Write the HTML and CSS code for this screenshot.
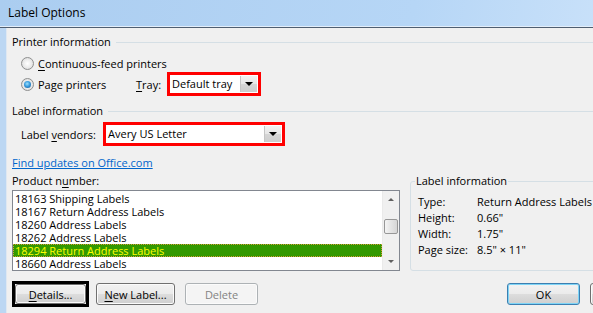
FILE: index.html
```html
<!DOCTYPE html>
<html lang="en">
<head>
    <meta charset="UTF-8">
    <title>Label Options</title>
    <link rel="stylesheet" href="styles.css">
</head>
<body>
    <div class="window">
        <div class="titlebar">Label Options</div>
        <div class="frame">
            <div class="client">
                <div class="section-head"><span>Printer information</span><i class="rule"></i></div>

                <div class="radio-row first">
                    <span class="radio"></span>
                    <span class="radio-label"><u>C</u>ontinuous-feed printers</span>
                </div>

                <div class="radio-row second">
                    <span class="radio checked"></span>
                    <span class="radio-label fixed">Pa<u>g</u>e printers</span>
                    <span class="field-label"><u>T</u>ray:</span>
                    <div class="combo tray">
                        <span class="combo-text">Default tray</span>
                        <span class="drop"><i></i></span>
                    </div>
                </div>

                <div class="section-head label-head"><span>Label information</span><i class="rule"></i></div>

                <div class="vendor-row">
                    <span class="vendor-label">Label <u>v</u>endors:</span>
                    <div class="combo vendors">
                        <span class="combo-text">Avery US Letter</span>
                        <span class="drop"><i></i></span>
                    </div>
                </div>

                <a class="link" href="#">Find updates on Office.com</a>

                <div class="lower">
                    <div class="product-col">
                        <div class="product-label">Product n<u>u</u>mber:</div>
                        <div class="listbox">
                            <ul class="items">
                                <li>18163 Shipping Labels</li>
                                <li>18167 Return Address Labels</li>
                                <li>18260 Address Labels</li>
                                <li>18262 Address Labels</li>
                                <li class="selected">18294 Return Address Labels</li>
                                <li>18660 Address Labels</li>
                            </ul>
                            <div class="scrollbar">
                                <span class="arrow up"></span>
                                <span class="track"><span class="thumb"></span></span>
                                <span class="arrow down"></span>
                            </div>
                        </div>
                    </div>

                    <fieldset class="info">
                        <legend>Label information</legend>
                        <div class="info-rows">
                            <div class="info-row"><span class="key">Type:</span><span>Return Address Labels</span></div>
                            <div class="info-row"><span class="key">Height:</span><span>0.66"</span></div>
                            <div class="info-row"><span class="key">Width:</span><span>1.75"</span></div>
                            <div class="info-row"><span class="key">Page size:</span><span>8.5" × 11"</span></div>
                        </div>
                    </fieldset>
                </div>

                <div class="buttons">
                    <span class="mark"><button class="btn details"><u>D</u>etails...</button></span>
                    <button class="btn newlabel"><u>N</u>ew Label...</button>
                    <button class="btn delete" disabled>Delete</button>
                    <span class="spacer"></span>
                    <button class="btn ok">OK</button>
                    <button class="btn cancel">Cancel</button>
                </div>
            </div>
        </div>
    </div>
</body>
</html>
```

FILE: styles.css
```css
html, body {
    margin: 0;
    padding: 0;
    overflow: hidden;
}
body {
    font-family: "Open Sans", "Noto Sans", sans-serif;
    font-size: 11px;
    color: #000;
    width: 593px;
    height: 313px;
}
u {
    text-decoration: underline;
    text-underline-offset: 2px;
}
.window {
    width: 700px;
    height: 313px;
    display: flex;
    flex-direction: column;
    background: linear-gradient(100deg, #abcdf0 0%, #b6d6f6 55%, #d7e9fc 100%);
}
.titlebar {
    height: 26px;
    line-height: 25px;
    padding-left: 8px;
    font-size: 12px;
    border-bottom: 1px solid #e3eefa;
    box-shadow: 0 1px 0 #4f5e70;
}
.frame {
    flex: 1;
    display: flex;
    padding-left: 6px;
    background: #bcd7f3;
    margin-top: 1px;
}
.client {
    width: 669px;
    background: #f0f0f0;
    border-left: 1px solid #dfe8f2;
    padding: 6px 12px 0 5px;
    box-sizing: border-box;
}
.section-head {
    display: flex;
    align-items: center;
    height: 16px;
    line-height: 16px;
}
.section-head .rule {
    flex: 1;
    height: 1px;
    margin-left: 5px;
    margin-right: -20px;
    background: #d5dfe5;
}
.label-head {
    margin-top: 7px;
}
.radio-row {
    display: flex;
    align-items: center;
    padding-left: 9px;
}
.radio-row.first {
    height: 16px;
    margin-top: 5px;
}
.radio-row.second {
    height: 24px;
    margin-top: 1px;
}
.radio {
    width: 13px;
    height: 13px;
    box-sizing: border-box;
    border-radius: 50%;
    border: 1px solid #8e8f8f;
    background: radial-gradient(circle at 50% 50%, #ffffff 0%, #eeeeee 45%, #d2d2d2 100%);
    margin-right: 4px;
}
.radio.checked::after {
    content: "";
    display: block;
    width: 7px;
    height: 7px;
    margin: 2px;
    border-radius: 50%;
    background: radial-gradient(circle at 45% 40%, #9fe0fb 0%, #3a9ee0 45%, #15508c 100%);
}
.radio-label.fixed {
    width: 98px;
}
.field-label {
    width: 31px;
}
.combo {
    display: flex;
    align-items: center;
    box-sizing: border-box;
    height: 24px;
    border: 3px solid #ff0000;
    background: #fff;
}
.combo.tray {
    width: 94px;
}
.combo.vendors {
    width: 182px;
}
.combo-text {
    flex: 1;
    padding-left: 2px;
    line-height: 16px;
}
.drop {
    width: 16px;
    height: 16px;
    margin-right: 1px;
    display: flex;
    align-items: center;
    justify-content: center;
    background: linear-gradient(#f2f2f2, #e6e6e6 50%, #d6d6d6 50%, #cdcdcd);
    border-left: 1px solid #c5c5c5;
}
.drop i {
    width: 0;
    height: 0;
    border-left: 4px solid transparent;
    border-right: 4px solid transparent;
    border-top: 4px solid #000;
}
.vendor-row {
    display: flex;
    align-items: center;
    height: 24px;
    margin-top: 3px;
    padding-left: 9px;
}
.vendor-label {
    width: 82px;
}
.link {
    display: block;
    width: max-content;
    height: 16px;
    line-height: 16px;
    margin-top: 9px;
    color: #0066cc;
    text-decoration: underline;
}
.lower {
    display: flex;
    margin-top: 2px;
}
.product-col {
    width: 388px;
}
.product-label {
    height: 16px;
    line-height: 16px;
}
.listbox {
    margin-top: 1px;
    height: 81px;
    box-sizing: border-box;
    border: 1px solid #828790;
    background: #fff;
    display: flex;
}
.items {
    list-style: none;
    margin: 0;
    padding: 1px 0 0 0;
    flex: 1;
}
.items li {
    height: 13px;
    line-height: 13px;
    padding-left: 2px;
    white-space: nowrap;
}
.items li.selected {
    background: #339900;
    color: #ffff00;
    outline: 1px dotted #d59a3a;
    outline-offset: -1px;
}
.scrollbar {
    width: 17px;
    display: flex;
    flex-direction: column;
    background: #f0f0f0;
    border-left: 1px solid #eaeaea;
    box-sizing: border-box;
}
.arrow {
    height: 17px;
    display: flex;
    align-items: center;
    justify-content: center;
}
.arrow::after {
    content: "";
    width: 0;
    height: 0;
    border-left: 3px solid transparent;
    border-right: 3px solid transparent;
}
.arrow.up::after {
    border-bottom: 3px solid #606060;
}
.arrow.down::after {
    border-top: 3px solid #606060;
}
.track {
    flex: 1;
    padding: 11px 1px 0 1px;
}
.thumb {
    display: block;
    height: 15px;
    box-sizing: border-box;
    border: 1px solid #979797;
    border-radius: 2px;
    background: linear-gradient(90deg, #f4f4f4, #e4e4e4 50%, #d6d6d6);
}
.info {
    flex: 1;
    margin: 0 0 0 10px;
    padding: 0 8px 0 4px;
    border: 1px solid #d5dfe5;
    border-radius: 3px;
}
.info legend {
    padding: 0 1px;
    line-height: 16px;
}
.info-rows {
    padding: 5px 0 0 3px;
}
.info-row {
    display: flex;
    height: 16px;
    line-height: 16px;
}
.info-row .key {
    width: 59px;
}
.buttons {
    display: flex;
    align-items: center;
    margin-top: 10px;
    height: 26px;
}
.mark {
    display: block;
    border: 3px solid #000;
    margin-right: 7px;
}
.btn {
    font-family: inherit;
    font-size: 11px;
    color: #000;
    height: 22px;
    padding: 0;
    border: 1px solid #707070;
    border-radius: 3px;
    background: linear-gradient(#f2f2f2 0%, #ebebeb 50%, #dddddd 50%, #cfcfcf 100%);
    box-shadow: inset 0 0 0 1px #fbfbfb;
}
.details {
    width: 71px;
    height: 20px;
    display: block;
}
.newlabel {
    width: 79px;
    margin-right: 10px;
}
.delete {
    width: 73px;
    color: #838383;
    border-color: #adb2b5;
    background: #f4f4f4;
}
.spacer {
    flex: 1;
}
.ok {
    width: 73px;
    border-color: #3c7fb1;
    box-shadow: inset 0 0 0 1px #7ed4f6;
    margin-right: 10px;
}
.cancel {
    width: 73px;
}
```
